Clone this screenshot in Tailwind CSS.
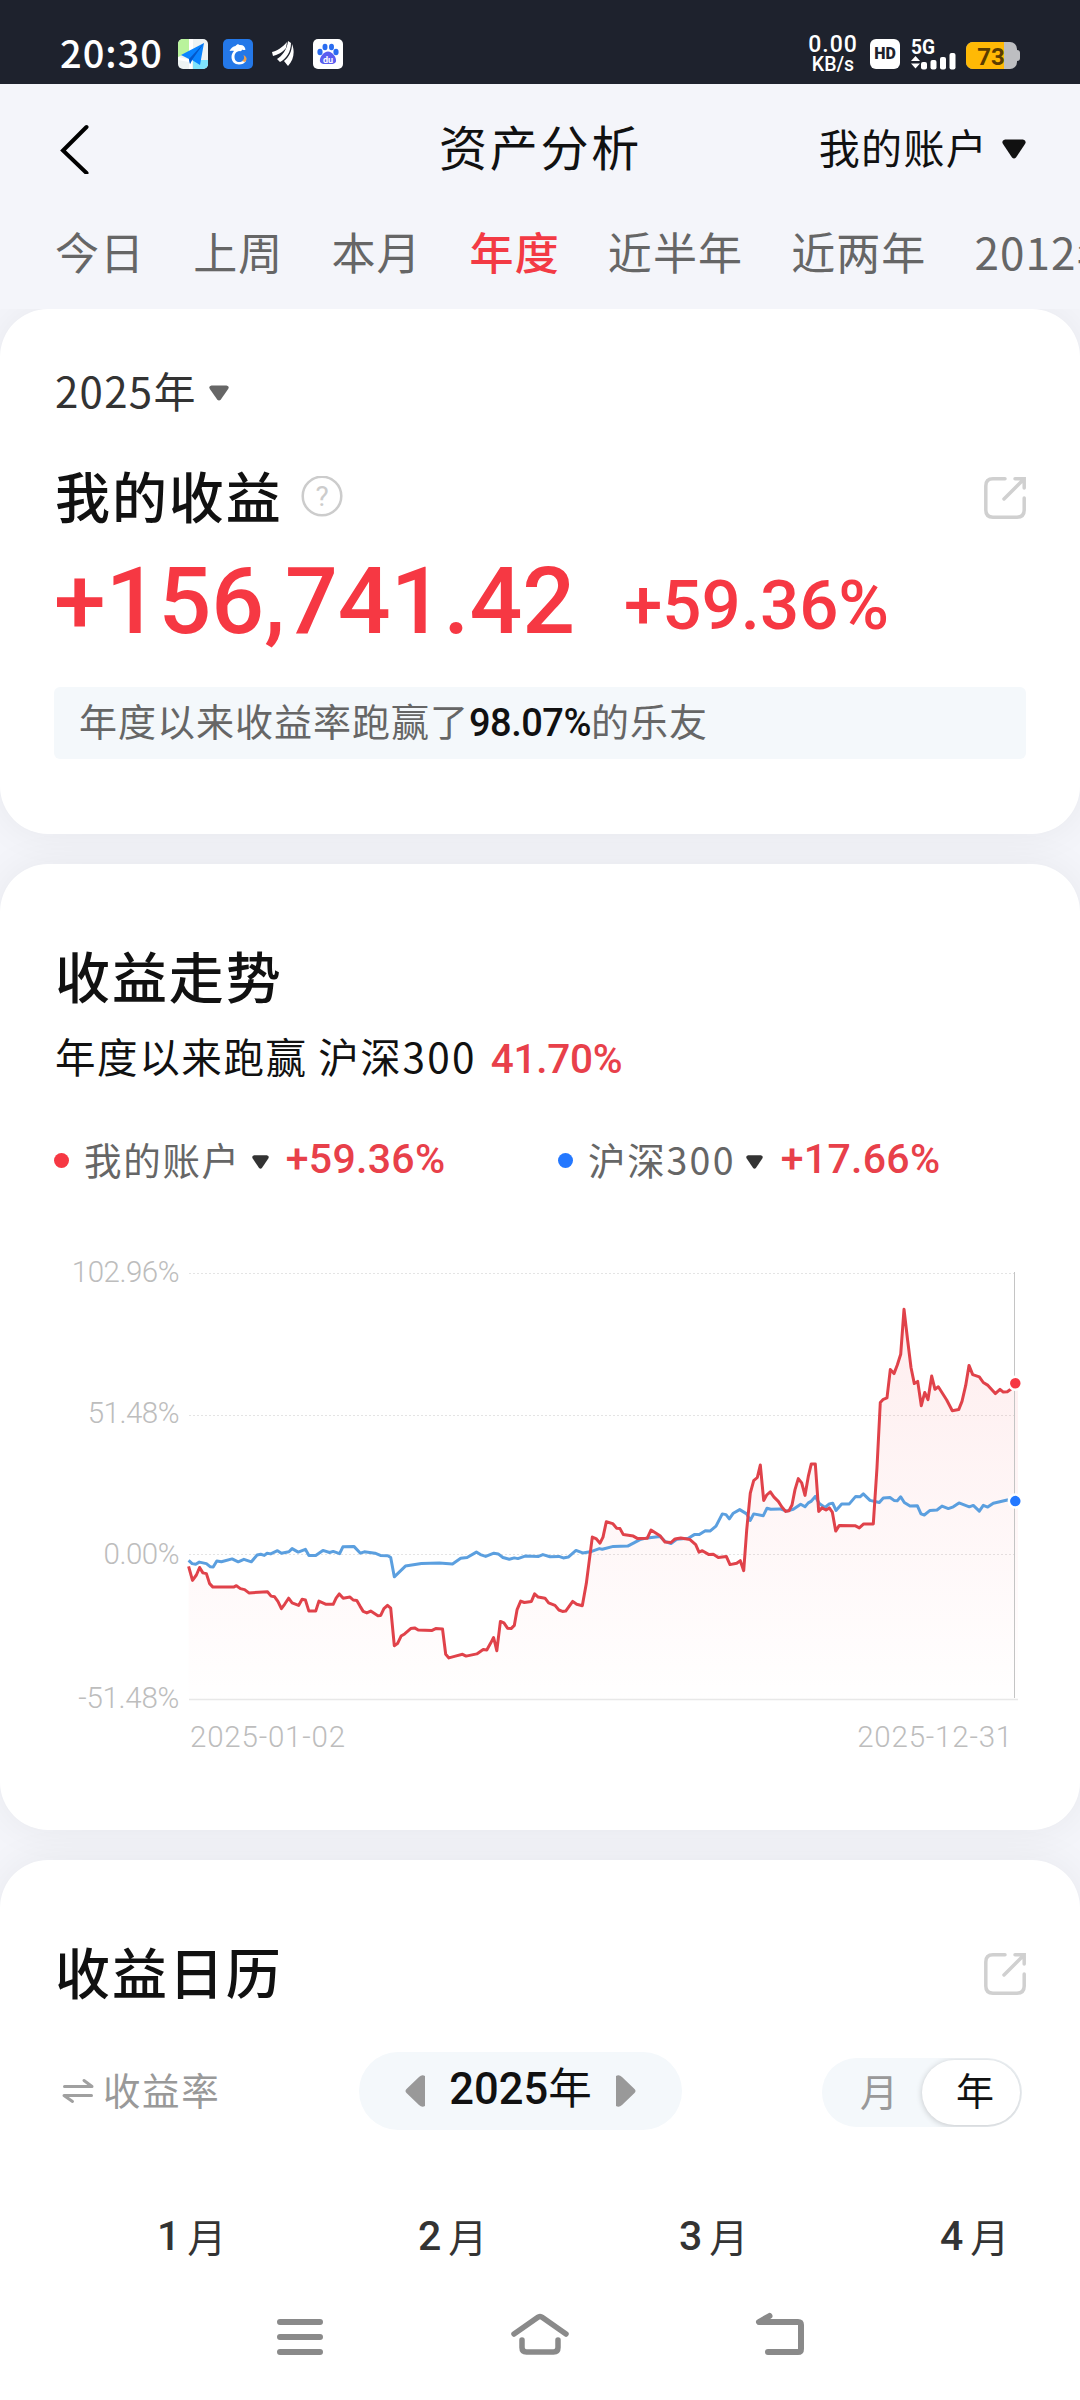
<!DOCTYPE html>
<html lang="zh-CN">
<head>
    <meta charset="UTF-8">
    <meta name="viewport" content="width=device-width, initial-scale=1.0">
    <title>资产分析</title>
    <script src="https://cdn.jsdelivr.net/npm/@tailwindcss/browser@4"></script>
</head>
<body class="bg-[#f4f5fa] text-[#111] font-['Noto_Sans_CJK_SC',sans-serif]">
<div class="w-[1080px] h-[2400px] overflow-hidden flex flex-col">

    <!-- Status bar -->
    <div class="h-[84px] shrink-0 bg-[#1e222d] text-white flex items-start justify-between pl-[60px] pr-[60px]">
        <div class="flex items-center h-[30px] mt-[39px]">
            <span class="w-[118px] text-[38px] leading-[30px] font-medium tracking-[1px] -mt-[4px] whitespace-nowrap">20:30</span>
            <svg class="w-[30px] h-[30px]" viewBox="0 0 30 30">
                <defs><clipPath id="map"><rect width="30" height="30" rx="5"/></clipPath></defs>
                <g clip-path="url(#map)">
                    <rect width="30" height="30" fill="#eef3f3"/>
                    <path d="M0 0H11V13L0 18Z" fill="#b9f39c"/>
                    <path d="M11 0h4v10l-4 4zM0 18l14 3v9h-3v-7L0 21z" fill="#fff"/>
                    <path d="M15 21H30V30H15Z" fill="#7fe3fb"/>
                    <path d="M26 4L3 16l8 4 1 5 2-4 8 5z" fill="#0a84ff"/>
                    <path d="M26 4L11 20l1 5 2-4z" fill="#0457c8"/>
                </g>
            </svg>
            <svg class="w-[30px] h-[30px] ml-[15px]" viewBox="0 0 30 30">
                <rect width="30" height="30" rx="5" fill="#2478e8"/>
                <path d="M6.500 12C8 9 10 7.500 12.500 7C14 5 15.500 5 16.500 6C20 5.500 22 7.500 22.500 10.500C21.500 11.500 20 11 19 10.500C19 12 17.500 12.500 16.500 12C13 12.500 11.500 15 11.500 18C11.500 21 13.500 23 16 23C18 23 19.500 22.500 21 21L23 22C21.500 24.500 19 25.500 16 25.500C11.500 25.500 8.500 22.500 8.500 18C8.500 15.500 9.500 13.500 11 12C9.500 11.500 8 12 6.500 12Z" fill="#fff"/>
                <path d="M20.500 16C24 18 24.500 20.500 22 23L19 22C21.500 20.500 21.500 18.500 20.500 16Z" fill="#f0a04b"/>
            </svg>
            <svg class="w-[22px] h-[26px] ml-[19px]" viewBox="0 0 22 26" fill="#fff">
                <path d="M0 11C5 10 11 6 15 1L14 7C10 12 5 14 1 15Z"/>
                <path d="M5 18C10 15 15 9 16 0L19 2C19 11 14 18 8 21Z"/>
                <path d="M12 20C17 16 20 10 20 3C23 10 22 19 16 25Z"/>
            </svg>
            <svg class="w-[30px] h-[30px] ml-[19px]" viewBox="0 0 30 30">
                <rect width="30" height="30" rx="5" fill="#fff"/>
                <g fill="#2a6cf0">
                    <ellipse cx="7" cy="13" rx="2.600" ry="3.200"/><ellipse cx="12" cy="8" rx="2.500" ry="3.300"/>
                    <ellipse cx="18.500" cy="8" rx="2.500" ry="3.300"/><ellipse cx="23" cy="13" rx="2.600" ry="3.200"/>
                </g>
                <path d="M15 12.500c4 0 9 6 8 10-1 3-4 2.500-8 2.500s-7 .5-8-2.500c-1-4 4-10 8-10z" fill="#5a5df0"/>
                <text x="15" y="23.500" text-anchor="middle" class="font-['Roboto',sans-serif] font-bold text-[9px]" fill="#fff">du</text>
            </svg>
        </div>
        <div class="flex items-start font-['Roboto',sans-serif] font-bold mt-[35px]">
            <div class="flex flex-col items-center w-[50px] whitespace-nowrap">
                <span class="text-[23px] leading-[20px] font-medium tracking-[1px]">0.00</span>
                <span class="text-[19.500px] leading-[20px] font-medium">KB/s</span>
            </div>
            <span class="w-[30px] h-[30px] mt-[4px] ml-[12px] rounded-[6px] bg-white text-[#1e222d] text-[16px] leading-[30px] font-black text-center">HD</span>
            <svg class="w-[46px] h-[32px] mt-[3px] ml-[11px]" viewBox="0 0 46 32" fill="#fff">
                <text x="0" y="16" class="font-['Roboto',sans-serif] font-bold text-[20px]" textLength="24" lengthAdjust="spacingAndGlyphs">5G</text>
                <path d="M0 23l4.500-5 4.500 5zM0 25.500h9l-4.500 5z"/>
                <rect x="10" y="24" width="6" height="7.500" rx="2"/>
                <rect x="19.500" y="22" width="6" height="9.500" rx="2"/>
                <rect x="29" y="19" width="6" height="12.500" rx="2"/>
                <rect x="38.500" y="15" width="6" height="16.500" rx="2"/>
            </svg>
            <svg class="w-[54px] h-[28px] mt-[7px] ml-[9px]" viewBox="0 0 54 28">
                <defs><clipPath id="bat"><rect width="51" height="27" rx="7"/></clipPath></defs>
                <rect x="46" y="8" width="8" height="11" rx="3" fill="#bdbec1"/>
                <g clip-path="url(#bat)">
                    <rect width="51" height="27" fill="#bdbec1"/>
                    <rect width="38" height="27" fill="#ffb905"/>
                </g>
                <text x="25" y="22.500" text-anchor="middle" class="font-['Roboto',sans-serif] font-bold text-[24px]" fill="#5a3c00">73</text>
            </svg>
        </div>
    </div>

    <!-- Title bar -->
    <div class="h-[130px] shrink-0 grid grid-cols-3 items-center pl-[60px] pr-[54px]">
        <svg class="w-[30px] h-[50px]" viewBox="0 0 30 50" fill="none" stroke="#000" stroke-width="4" stroke-linecap="round">
            <path d="M26.500 3L3 26.500 26.500 49"/>
        </svg>
        <h1 class="text-[48px] leading-[60px] tracking-[2.800px] text-center whitespace-nowrap -mt-[8px] pr-[5px]">资产分析</h1>
        <div class="flex items-center justify-end whitespace-nowrap">
            <span class="text-[41px] leading-[50px] tracking-[1.300px] -mt-[7px]">我的账户</span>
            <svg class="w-[24px] h-[20px] ml-[14px]" viewBox="0 0 24 20" fill="#111"><path d="M3 0.500H21Q25 1.500 23 5L14 18.500Q12 20.500 10 18.500L1 5Q-1 1.500 3 0.500Z"/></svg>
        </div>
    </div>

    <!-- Period tabs -->
    <div class="h-[95px] shrink-0 flex gap-[48px] pl-[55px] pt-[5px] text-[44px] leading-[64px] tracking-[1.100px] text-[#666] whitespace-nowrap">
        <span>今日</span>
        <span>上周</span>
        <span>本月</span>
        <span class="text-[#f33a44] font-medium">年度</span>
        <span>近半年</span>
        <span>近两年</span>
        <span>2012年</span>
    </div>

    <main class="flex-1 overflow-hidden flex flex-col gap-[30px]">

        <!-- Profit summary -->
        <section class="h-[525px] shrink-0 bg-white rounded-[48px] px-[54px] pt-[52px] shadow-[0_0_40px_rgba(20,20,40,0.06)]">
            <div class="h-[60px] flex items-center">
                <span class="text-[42px] leading-[60px] tracking-[1.300px] text-[#333] -mt-[2px] ml-[1px]">2025年</span>
                <svg class="w-[20px] h-[16px] ml-[12px] mt-[3px]" viewBox="0 0 24 20" fill="#666" preserveAspectRatio="none"><path d="M3 0.500H21Q25 1.500 23 5L14 18.500Q12 20.500 10 18.500L1 5Q-1 1.500 3 0.500Z"/></svg>
            </div>
            <div class="h-[60px] mt-[46px] flex items-center">
                <h2 class="text-[55px] leading-[60px] tracking-[1.900px] font-medium -mt-[6px] ml-[1px]">我的收益</h2>
                <svg class="w-[42px] h-[42px] ml-[18px]" viewBox="0 0 42 42">
                    <circle cx="21" cy="20" r="19.300" fill="none" stroke="#ccc" stroke-width="2.500"/>
                    <text x="21" y="30" text-anchor="middle" class="font-['Roboto',sans-serif] text-[28px]" fill="#ccc">?</text>
                </svg>
                <svg class="w-[42px] h-[42px] ml-auto mt-[2px]" viewBox="0 0 42 42" fill="none" stroke="#d0d0d0" stroke-width="3.500" stroke-linecap="round">
                    <path d="M21 1.800H9Q1.800 1.800 1.800 9V33Q1.800 40.200 9 40.200H33Q40.200 40.200 40.200 33V21M20 22L39.500 2.500M31 1.800H40.200V11"/>
                </svg>
            </div>
            <div class="h-[70px] mt-[38px] flex items-center font-['Roboto',sans-serif] font-medium text-[#f63843] whitespace-nowrap">
                <span class="w-[570px] text-[93px] leading-[70px] mt-[3px]">+156,741.42</span>
                <span class="text-[69px] leading-[70px] mt-[11px]">+59.36%</span>
            </div>
            <p class="h-[72px] mt-[52px] rounded-[6px] bg-[#f4f8fb] px-[25px] text-[38px] leading-[66px] tracking-[1px] text-[#666] whitespace-nowrap">年度以来收益率跑赢了<span class="font-['Roboto',sans-serif] font-medium text-[#111] tracking-[-0.500px]">98.07%</span>的乐友</p>
        </section>

        <!-- Profit trend -->
        <section class="h-[966px] shrink-0 bg-white rounded-[48px] pt-[83px] shadow-[0_0_40px_rgba(20,20,40,0.06)]">
            <div class="px-[54px]">
                <h2 class="text-[55px] leading-[54px] pb-[6px] pl-[1px] tracking-[1.900px] font-medium">收益走势</h2>
                <p class="h-[48px] mt-[26px] pl-[1px] text-[40.500px] leading-[45px] tracking-[1.600px] whitespace-nowrap">年度以来跑赢 沪深<span class="tracking-[2.300px]">300</span><span class="font-['Roboto',sans-serif] font-medium text-[#e8404a] tracking-[-0.300px] ml-[14px]">41.70%</span></p>
                <div class="h-[48px] mt-[55px] flex text-[#666] text-[37.500px] leading-[44px] tracking-[1.700px] whitespace-nowrap">
                    <div class="w-[504px] flex items-center">
                        <i class="w-[15px] h-[15px] rounded-full bg-[#f63843]"></i>
                        <span class="ml-[15px] -mt-[3px]">我的账户</span>
                        <svg class="w-[17px] h-[14px] ml-[11px] mt-[4px]" viewBox="0 0 24 20" fill="#333" preserveAspectRatio="none"><path d="M3 0.500H21Q25 1.500 23 5L14 18.500Q12 20.500 10 18.500L1 5Q-1 1.500 3 0.500Z"/></svg>
                        <span class="ml-[17px] -mt-[3px] font-['Roboto',sans-serif] font-medium text-[41px] tracking-[0.300px] text-[#e8404a]">+59.36%</span>
                    </div>
                    <div class="flex items-center">
                        <i class="w-[15px] h-[15px] rounded-full bg-[#2478ff]"></i>
                        <span class="ml-[15px] -mt-[3px]">沪深<span class="tracking-[2.300px]">300</span></span>
                        <svg class="w-[17px] h-[14px] ml-[10px] mt-[4px]" viewBox="0 0 24 20" fill="#333" preserveAspectRatio="none"><path d="M3 0.500H21Q25 1.500 23 5L14 18.500Q12 20.500 10 18.500L1 5Q-1 1.500 3 0.500Z"/></svg>
                        <span class="ml-[18px] -mt-[3px] font-['Roboto',sans-serif] font-medium text-[41px] tracking-[0.300px] text-[#e8404a]">+17.66%</span>
                    </div>
                </div>
            </div>

            <svg class="w-[1080px] h-[540px] mt-[46px] font-['Roboto',sans-serif] font-light text-[29.500px]" viewBox="0 0 1080 540" fill="none">
                <defs>
                    <linearGradient id="area" gradientUnits="userSpaceOnUse" x1="0" y1="79" x2="0" y2="469">
                        <stop offset="0" stop-color="#f63843" stop-opacity="0.09"/>
                        <stop offset="1" stop-color="#f63843" stop-opacity="0.003"/>
                    </linearGradient>
                </defs>
                <g stroke="#e4e4e4" stroke-width="1" stroke-dasharray="2 2">
                    <path d="M189 43.500H1014M189 185.500H1014M189 324.500H1014"/>
                </g>
                <path d="M189 469.500H1018" stroke="#e8e8e8" stroke-width="1.500"/>
                <g fill="#bdbdbd" text-anchor="end">
                    <text x="179" y="52" class="tracking-[-0.500px]">102.96%</text>
                    <text x="179" y="193" class="tracking-[-0.500px]">51.48%</text>
                    <text x="179" y="334" class="tracking-[-0.500px]">0.00%</text>
                    <text x="179" y="477.500" class="tracking-[-0.300px]">-51.48%</text>
                    <text x="1013" y="517" class="tracking-[0.800px]">2025-12-31</text>
                    <text x="190" y="517" text-anchor="start" class="tracking-[0.800px]">2025-01-02</text>
                </g>
                <path id="fill" fill="url(#area)"/>
                <path id="index" stroke="#5b9fdf" stroke-width="3" stroke-linejoin="round"/>
                <path id="mine" stroke="#e0424a" stroke-width="3" stroke-linejoin="round"/>
                <path d="M1014.500 42V468" stroke="#c4c4c4"/>
                <circle cx="1015.300" cy="153.200" r="6.500" fill="#f63843" stroke="#fff" stroke-width="2.500"/>
                <circle cx="1015.300" cy="271.100" r="6.500" fill="#2478ff" stroke="#fff" stroke-width="2.500"/>
            </svg>
        </section>

        <!-- Profit calendar -->
        <section class="flex-1 bg-white rounded-t-[48px] pt-[83px] shadow-[0_0_40px_rgba(20,20,40,0.06)]">
            <div class="h-[60px] px-[54px] flex items-center justify-between">
                <h2 class="text-[55px] leading-[60px] tracking-[1.900px] font-medium -mt-[6px] ml-[1px]">收益日历</h2>
                <svg class="w-[42px] h-[42px] mt-[2px]" viewBox="0 0 42 42" fill="none" stroke="#d0d0d0" stroke-width="3.500" stroke-linecap="round">
                    <path d="M21 1.800H9Q1.800 1.800 1.800 9V33Q1.800 40.200 9 40.200H33Q40.200 40.200 40.200 33V21M20 22L39.500 2.500M31 1.800H40.200V11"/>
                </svg>
            </div>
            <div class="h-[78px] mt-[49px] pl-[62px] pr-[58px] flex items-center whitespace-nowrap">
                <div class="w-[297px] flex items-center text-[#999]">
                    <svg class="w-[32px] h-[26px]" viewBox="0 0 32 26" fill="none" stroke="#a0a0a0" stroke-width="3" stroke-linecap="round" stroke-linejoin="round">
                        <path d="M2.500 8.500H30L22 2.500M29.500 17.500H2L10.500 23.500"/>
                    </svg>
                    <span class="ml-[9px] -mt-[4px] text-[37.500px] leading-[50px] tracking-[1.600px]">收益率</span>
                </div>
                <div class="w-[323px] h-[78px] rounded-full bg-[#f4f8fb] flex items-center justify-between px-[46px]">
                    <svg class="w-[20px] h-[32px]" viewBox="0 0 20 32" fill="#999"><path d="M20 1V31Q17 33 14 30L1.500 18Q-0.500 16 1.500 14L14 2Q17 -1 20 1Z"/></svg>
                    <span class="text-[43.500px] leading-[60px] -mt-[7px]"><span class="font-['Roboto',sans-serif] font-medium">2025</span>年</span>
                    <svg class="w-[20px] h-[32px]" viewBox="0 0 20 32" fill="#999"><path d="M0 1V31Q3 33 6 30L18.500 18Q20.500 16 18.500 14L6 2Q3 -1 0 1Z"/></svg>
                </div>
                <div class="w-[200px] h-[69px] mt-[3px] ml-auto rounded-full bg-[#f4f8fb] overflow-hidden flex items-center text-[38px] leading-[58px]">
                    <span class="w-[100px] pl-[38px] pb-[6px] text-[#999]">月</span>
                    <span class="w-[98px] h-[65px] rounded-full bg-white pl-[34px] shadow-[0_1px_6px_rgba(0,0,0,0.2)]">年</span>
                </div>
            </div>
            <div class="h-[48px] mt-[84px] pl-[59px] flex text-[39px] leading-[43px] text-[#333] whitespace-nowrap">
                <div class="w-[261px] shrink-0 flex gap-[7px] pl-[98px]"><span class="font-['Roboto',sans-serif] font-medium text-[41px] leading-[45px]">1</span>月</div>
                <div class="w-[261px] shrink-0 flex gap-[7px] pl-[98px]"><span class="font-['Roboto',sans-serif] font-medium text-[41px] leading-[45px]">2</span>月</div>
                <div class="w-[261px] shrink-0 flex gap-[7px] pl-[98px]"><span class="font-['Roboto',sans-serif] font-medium text-[41px] leading-[45px]">3</span>月</div>
                <div class="w-[261px] shrink-0 flex gap-[7px] pl-[98px]"><span class="font-['Roboto',sans-serif] font-medium text-[41px] leading-[45px]">4</span>月</div>
            </div>

            <!-- System navigation -->
            <div class="flex justify-between items-center h-[60px] mt-[44px] px-[270px]">
                <svg class="w-[60px] h-[60px]" viewBox="0 0 60 60" stroke="#8a8a8a" stroke-width="6" stroke-linecap="round">
                    <path d="M10 16H50M10 31H50M10 46H50"/>
                </svg>
                <svg class="w-[60px] h-[60px]" viewBox="0 0 60 60" fill="none" stroke="#8a8a8a" stroke-width="5.500" stroke-linecap="round">
                    <path d="M4 28L27.500 11.500Q30 9.500 32.500 11.500L56 28M12 34V41.500Q12 46 16.500 46H43.500Q48 46 48 41.500V34"/>
                </svg>
                <svg class="w-[60px] h-[60px]" viewBox="0 0 60 60" fill="none" stroke="#8a8a8a" stroke-width="6" stroke-linecap="round" stroke-linejoin="round">
                    <path d="M19.500 10L9 16H48Q51 16 51 19V43Q51 46 48 46H18"/>
                </svg>
            </div>
        </section>
    </main>
</div>

<script>
    // Account curve, x y pairs
    const mine = "188.6,336.4 192.5,350.4 196.4,345 199.6,337.5 202.9,342.9 206.4,343.6 209.6,353.6 212.9,357.1 233.6,357.1 236.4,355.7 240.4,358.6 244.6,359.6 248.9,362.9 267.5,361.8 271.1,366.1 274.6,366.8 277.9,371.4 281.4,378.6 284.6,374.3 288.6,368.2 292.1,372.9 298.6,375.4 302.1,369.3 305.4,370 308.9,381.1 315.7,381.1 318.9,371.1 326.1,374.3 333.2,374.3 336.1,368.2 339.3,363.9 343.2,368.2 350,367.1 353.2,370 356.8,370.4 360,376.1 363.2,381.4 366.8,382.9 370.7,381.1 377.9,385.7 380.7,385.4 383.9,378.6 387.5,375.4 390.7,378.2 394.3,415.7 397.5,413.6 401.1,406.1 404.6,403.9 410.7,398.6 414.6,397.9 418.2,400 432.1,400.4 435.7,398.6 442.5,398.9 445.7,424.3 448.9,427.9 455.4,426.1 462.5,424.3 466.1,426.1 476.8,423.9 483.2,419.6 486.8,420 490.4,413.6 493.6,407.5 496.8,420.7 500.4,391.4 503.9,392.9 507.5,398.2 511.1,398.6 514.3,395.4 517.1,379.6 520.7,371.1 524.3,372.5 531.4,371.4 534.6,363.9 538.2,367.1 545,368.2 548.6,372.9 555,375.4 558.9,380 562.5,381.4 565.7,381.1 572.7,371.4 576.7,374.3 582.3,375.7 586.3,353.6 592.3,307.1 596,308.6 600,313.2 603,307.1 606.3,291.8 612.7,293.6 616.7,298.2 620,298.6 623.3,304.6 633.3,306.1 637.7,308.6 647.3,308.2 651,300 660,305.7 665,312.1 671,312.5 675,308.9 680.7,307.9 690,309.6 695.7,314.6 699,322.1 702.3,320.7 709,324.6 713.3,324.3 718.3,327.5 726.3,326.4 730,334.6 736.7,333.2 740.3,330.7 743.7,340.7 746.7,300 750.3,263.2 753.7,250.7 757.3,247.5 760.3,235 763.7,270.4 766.7,265 770.3,261.8 774,267.1 778.3,271.4 781.7,276.8 785.7,281.4 789,280.7 792,275 795,259.6 798.3,248.6 801.7,252.9 805,265.4 808.3,246.4 811.3,233.9 815.3,233.9 818.7,281.4 822,277.9 826,280 829.3,277.9 832.3,282.1 835.7,301.1 839.3,295.4 855,295.7 859.3,297.9 863.7,293.9 873.3,293.9 877,237.5 880.3,172.5 883.3,169.3 887,167.9 890.3,139.6 894,143.6 897.3,135 900.7,124.3 904,79.3 907.7,110.7 911,137.5 914.3,153.6 917.7,151.4 921.3,175.7 924.7,162.5 928,169.6 931.7,146.1 935,159.3 938.3,156.8 946.7,170 952.3,180.7 958.7,179.6 962,171.4 965.7,155.4 969,135.4 972.7,144.6 979.3,146.8 983.3,152.5 988,155.4 995.3,163.6 1000,159.3 1003.3,162.1 1007.3,161.8 1010.7,159.3 1015.3,153.2";

    // CSI 300 curve
    const index = "188.6,330.4 192.1,333.6 195.7,334.3 199.3,332.1 206.4,333.6 210.4,336.8 213.2,337.1 216.8,331.1 221.4,331.8 232.1,328.9 238.2,331.8 243.9,329.3 251.4,331.8 257.1,325 260.7,324.3 264.3,325.4 267.1,323.2 270.7,323.9 277.5,320.7 281.4,323.2 288.9,321.8 292.1,318.6 298.2,322.1 305.4,319.3 308.9,325.4 315.7,325.4 322.9,320.4 329.6,322.5 333.2,321.4 339.6,323.6 342.9,316.8 353.9,316.4 360.4,323.2 364.3,321.8 375,323.2 380.4,325.4 387.9,325.7 390.7,327.5 394.3,346.8 405.4,336.1 421.4,333.6 439.3,332.9 452.5,333.9 460.7,328.2 467.1,327.5 476.4,322.1 480.4,324.6 485.7,326.4 493.9,323.2 498.2,323.9 502.9,327.5 509.3,329.3 514.3,327.9 517.9,328.6 525,326.1 538.6,326.4 542.9,324.6 550,326.8 558.9,326.4 563.3,327.9 568.3,327.1 576,320.4 582.7,322.9 591.7,321.4 599.3,318.6 602.3,319.3 613.3,316.4 627.7,316.1 640,309.6 647.3,307.9 660,306.4 665,311.4 671,313.6 676.7,309.3 688.3,308.2 694.3,304.6 699.3,304.6 705.3,300.7 710,301.1 716,296.1 722.3,283.9 726,284.6 729.3,288.9 733.3,283.2 739.7,279.6 746.7,283.9 750.3,290.4 753.7,283.9 763.3,285.7 767,278.2 770.7,279.3 780,278.9 786.7,281.1 793.3,279.3 800.7,274.3 805,276.8 808.3,272.9 811,271.4 815.3,266.4 819.3,273.6 825,277.5 829.3,273.9 832.7,273.2 836,280.4 841.7,273.9 849.3,273.9 855.7,266.4 860,266.8 863.3,263.9 870,270.4 879.3,272.5 883.3,267.9 890,267.5 894,270.4 897.3,270.7 900.7,266.8 904.3,272.5 910,276.1 917.3,275.7 921,283.9 924.3,285 930,280.4 937,280 942,276.1 948.3,278.6 953.3,276.8 959,272.9 969.3,276.8 973.3,275.4 979.3,281.1 983.3,275.4 987.7,277.1 993.3,273.2 1007.3,270 1015.3,271.1";

    document.getElementById("mine").setAttribute("d", "M" + mine);
    document.getElementById("index").setAttribute("d", "M" + index);
    document.getElementById("fill").setAttribute("d", "M" + mine + " L1018,153 1018,469 188.6,469Z");
</script>
</body>
</html>
